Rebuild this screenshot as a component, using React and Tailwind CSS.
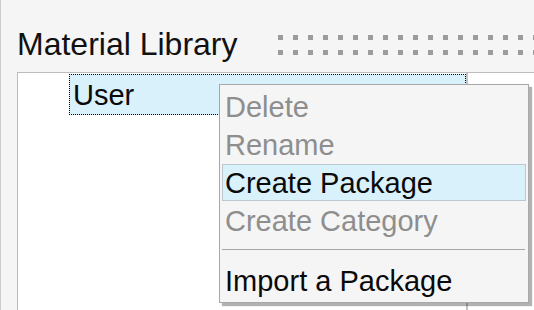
import React from 'react';

const FONT = "font-['Liberation_Sans',Arial,sans-serif]";

const ITEMS = [
  { label: 'Delete', disabled: true },
  { label: 'Rename', disabled: true },
  { label: 'Create Package', active: true },
  { label: 'Create Category', disabled: true },
  { separator: true },
  { label: 'Import a Package' }
];

function Grip() {
  const dots = Array.from({ length: 18 });
  return (
    <div className="flex flex-col gap-[10px] mt-[35px] overflow-hidden flex-1">
      {[0, 1].map((row) => (
        <div key={row} className="flex gap-[10px]">
          {dots.map((_, i) => (
            <span key={i} className="w-[5px] h-[5px] shrink-0 bg-[#9c9c9c]" />
          ))}
        </div>
      ))}
    </div>
  );
}

function ContextMenu() {
  return (
    <div className="absolute left-[218px] top-[84px] w-[310px] h-[219px] bg-[#f5f5f5] border border-[#a8a8a8] shadow-[3px_3px_1px_rgba(0,0,0,0.3)] p-[2px] flex flex-col">
      {ITEMS.map((item, i) =>
        item.separator ? (
          <div key={i} className="h-[23px] flex items-center">
            <div className="h-px w-[303px] bg-[#a6a6a6] -mt-[1px]" />
          </div>
        ) : (
          <div
            key={i}
            className={`flex items-center text-[29px] leading-none pt-[2px] ${
              item.active
                ? 'h-[38px] bg-[#d9f1fb] border border-[#bcc8cf] pl-[2px]'
                : 'h-[39px] pl-[3px]'
            } ${item.disabled ? 'text-[#8e8e8e]' : 'text-[#0a0a0a]'}`}
          >
            {item.label}
          </div>
        )
      )}
    </div>
  );
}

export default function App() {
  return (
    <div className={`${FONT} relative w-[534px] h-[310px] overflow-hidden bg-[#f5f5f5] border-l border-[#cccccc] flex flex-col`}>
      <div className="h-[72px] flex shrink-0">
        <div className="ml-[16px] w-[261px] shrink-0">
          <h1 className="mt-[28px] text-[32px] leading-none text-[#111] whitespace-nowrap">
            Material Library
          </h1>
        </div>
        <Grip />
      </div>

      <div className="flex-1 ml-[16px] border-t border-l border-[#bcbcbc] bg-white flex">
        <div className="w-[448px] pt-[1px]">
          <div className="ml-[51px] h-[41px] bg-[#d9f1fb] border border-dotted border-black flex items-center pl-[3px] pt-[2px] text-[29px] leading-none text-[#0a0a0a]">
            User
          </div>
        </div>
        <div className="w-[2px] bg-[#c4c4c4]" />
        <div className="flex-1" />
      </div>

      <ContextMenu />
    </div>
  );
}
